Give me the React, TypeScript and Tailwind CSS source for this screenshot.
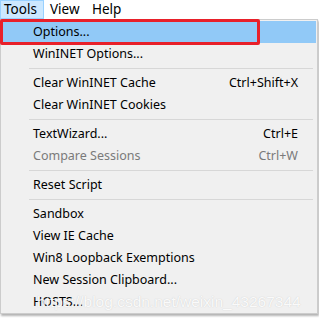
type Entry =
  | { kind: "item"; label: string; shortcut?: string; disabled?: boolean; active?: boolean }
  | { kind: "sep" };

const entries: Entry[] = [
  { kind: "item", label: "Options...", active: true },
  { kind: "item", label: "WinINET Options..." },
  { kind: "sep" },
  { kind: "item", label: "Clear WinINET Cache", shortcut: "Ctrl+Shift+X" },
  { kind: "item", label: "Clear WinINET Cookies" },
  { kind: "sep" },
  { kind: "item", label: "TextWizard...", shortcut: "Ctrl+E" },
  { kind: "item", label: "Compare Sessions", shortcut: "Ctrl+W", disabled: true },
  { kind: "sep" },
  { kind: "item", label: "Reset Script" },
  { kind: "sep" },
  { kind: "item", label: "Sandbox" },
  { kind: "item", label: "View IE Cache" },
  { kind: "item", label: "Win8 Loopback Exemptions" },
  { kind: "item", label: "New Session Clipboard..." },
  { kind: "item", label: "HOSTS..." },
];

export default function App() {
  return (
    <div
      className="relative h-[320px] w-[319px] overflow-hidden bg-white text-[12.5px] text-black"
      style={{ fontFamily: '"Noto Sans", "Segoe UI", sans-serif' }}
    >
      {/* menu bar */}
      <div className="flex h-[19px] items-center bg-white text-[13.5px]">
        <div className="flex h-[19px] w-[44px] shrink-0 items-center border border-[#99d1ff] bg-[#cce8ff] pl-[3px]">
          Tools
        </div>
        <div className="w-[48px] shrink-0 pl-[6px]">View</div>
        <div className="shrink-0">Help</div>
      </div>

      {/* dropdown */}
      <div className="w-[318px] border border-[#cccccc] bg-[#f0f0f0] pt-[1px] shadow-[1px_2px_2px_rgba(0,0,0,0.3)]">
        {entries.map((e, i) =>
          e.kind === "sep" ? (
            <div key={i} className="flex h-[7px] items-center pl-[28px] pr-[4px]">
              <div className="h-px w-full bg-[#d7d7d7]" />
            </div>
          ) : (
            <div
              key={i}
              className={`relative mx-[1px] flex h-[22px] items-center pl-[31px] pr-[18px] ${
                e.active ? "bg-[#91c9f7]" : ""
              } ${e.disabled ? "text-[#7a7a7a]" : ""}`}
            >
              <span className="flex-1">{e.label}</span>
              {e.shortcut && <span>{e.shortcut}</span>}
            </div>
          )
        )}
      </div>

      {/* red annotation box */}
      <div className="absolute left-0 top-[19px] h-[26px] w-[260px] rounded-[2px] border-[3px] border-[#e8202a]" />

      {/* watermark */}
      <div
        className="absolute left-[37px] top-[290px] text-[15.5px] text-white/90 [text-shadow:0_0_1px_rgba(140,140,140,0.45)]"
        style={{ fontFamily: '"Liberation Sans", Arial, sans-serif' }}
      >
        https://blog.csdn.net/weixin_43267344
      </div>
    </div>
  );
}
